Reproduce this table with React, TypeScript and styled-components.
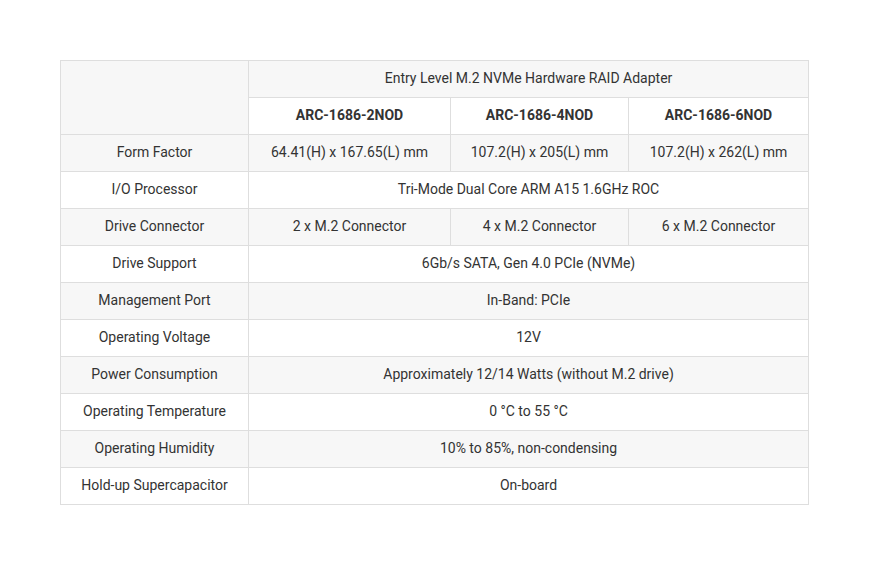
import React from 'react';
import styled, { createGlobalStyle } from 'styled-components';

const GlobalStyle = createGlobalStyle`
  body {
    margin: 0;
    background: #fff;
    font-family: Roboto, "Liberation Sans", Arial, sans-serif;
  }
`;

const Page = styled.div`
  padding: 60px 0 0 60px;
`;

const SpecTable = styled.table`
  width: 748px;
  table-layout: fixed;
  border-collapse: collapse;
  font-size: 14px;
  color: #333;
`;

const Row = styled.tr<{ shaded?: boolean }>`
  height: 37px;
  background: ${({ shaded }) => (shaded ? '#f7f7f7' : '#fff')};
`;

const Cell = styled.td<{ bold?: boolean }>`
  border: 1px solid #dedede;
  padding: 0 8px 2px;
  text-align: center;
  vertical-align: middle;
  font-weight: ${({ bold }) => (bold ? 700 : 400)};
  white-space: nowrap;
`;

type Spec = { label: string; values: string[] };

const specs: Spec[] = [
  { label: 'Form Factor', values: ['64.41(H) x 167.65(L) mm', '107.2(H) x 205(L) mm', '107.2(H) x 262(L) mm'] },
  { label: 'I/O Processor', values: ['Tri-Mode Dual Core ARM A15 1.6GHz ROC'] },
  { label: 'Drive Connector', values: ['2 x M.2 Connector', '4 x M.2 Connector', '6 x M.2 Connector'] },
  { label: 'Drive Support', values: ['6Gb/s SATA, Gen 4.0 PCIe (NVMe)'] },
  { label: 'Management Port', values: ['In-Band: PCIe'] },
  { label: 'Operating Voltage', values: ['12V'] },
  { label: 'Power Consumption', values: ['Approximately 12/14 Watts (without M.2 drive)'] },
  { label: 'Operating Temperature', values: ['0 °C to 55 °C'] },
  { label: 'Operating Humidity', values: ['10% to 85%, non-condensing'] },
  { label: 'Hold-up Supercapacitor', values: ['On-board'] },
];

const models = ['ARC-1686-2NOD', 'ARC-1686-4NOD', 'ARC-1686-6NOD'];

export default function App() {
  return (
    <Page>
      <GlobalStyle />
      <SpecTable>
        <colgroup>
          <col style={{ width: 188 }} />
          <col style={{ width: 202 }} />
          <col style={{ width: 178 }} />
          <col style={{ width: 180 }} />
        </colgroup>
        <tbody>
          <Row shaded>
            <Cell rowSpan={2} />
            <Cell colSpan={3}>Entry Level M.2 NVMe Hardware RAID Adapter</Cell>
          </Row>
          <Row>
            {models.map((m) => (
              <Cell key={m} bold>{m}</Cell>
            ))}
          </Row>
          {specs.map((spec, i) => (
            <Row key={spec.label} shaded={i % 2 === 0}>
              <Cell>{spec.label}</Cell>
              {spec.values.length === 1 ? (
                <Cell colSpan={3}>{spec.values[0]}</Cell>
              ) : (
                spec.values.map((v) => <Cell key={v}>{v}</Cell>)
              )}
            </Row>
          ))}
        </tbody>
      </SpecTable>
    </Page>
  );
}
